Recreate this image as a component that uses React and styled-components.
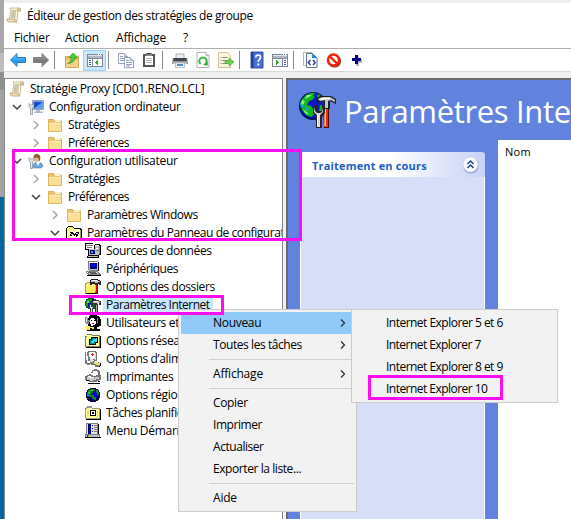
import React from 'react';
import styled, { createGlobalStyle } from 'styled-components';

const Global = createGlobalStyle`
  * { box-sizing: border-box; }
  html, body { margin: 0; padding: 0; overflow: hidden; }
  body { font-family: "Open Sans", "Noto Sans", sans-serif; font-size: 12px; color: #000; }
  svg { display: block; flex: none; overflow: visible; }
`;

const Screen = styled.div`
  position: relative;
  display: flex;
  width: 571px;
  height: 519px;
  overflow: hidden;
  background: #fff;
`;
const Desktop = styled.div`
  flex: none;
  width: 4px;
  background: linear-gradient(#a8a8a8 0 53px, #bcbcbc 53px 72px, #8f8f8f 72px 90px, #a3a3a3 90px 197px, #00679f 197px);
`;
const Window = styled.div`
  flex: 1;
  min-width: 0;
  display: flex;
  flex-direction: column;
  border-top: 3px solid #eeeff1;
`;
const Text = styled.span`
  white-space: pre;
  letter-spacing: ${(p) => p.$ls ?? -0.2}px;
`;
const TitleBar = styled.div`
  height: 24px;
  display: flex;
  align-items: center;
  gap: 5px;
  padding-left: 2px;
`;
const MenuBar = styled.div`
  height: 22px;
  display: flex;
  align-items: center;
  border-bottom: 1px solid #b0b0b0;
`;
const MenuBarItem = styled.div`
  width: ${(p) => p.$w}px;
  padding-left: 10px;
  padding-bottom: 1px;
`;
const Toolbar = styled.div`
  height: 23px;
  display: flex;
  align-items: center;
  padding-left: 2px;
  border-bottom: 1px solid #dadada;
`;
const ToolButton = styled.div`
  width: 23px;
  height: 21px;
  display: flex;
  align-items: center;
  justify-content: center;
  background: ${(p) => (p.$on ? '#cce8ff' : 'none')};
  border: 1px solid ${(p) => (p.$on ? '#99d1ff' : 'transparent')};
`;
const Divider = styled.div`
  width: 8px;
  height: 18px;
  padding-left: 2px;
  &::before { content: ''; display: block; width: 1px; height: 100%; background: #8a8a8a; }
`;
const Body = styled.div`
  flex: 1;
  min-height: 0;
  display: flex;
  padding-top: 6px;
  background: #f0f0f0;
`;
const Tree = styled.div`
  width: 279px;
  flex: none;
  padding-top: 1px;
  border: 1px solid #828790;
  border-bottom: 0;
  background: #fff;
  overflow: hidden;
`;
const TreeRow = styled.div`
  height: 18px;
  display: flex;
  align-items: center;
  padding-left: ${(p) => p.$level * 19 - 15}px;
`;
const Expander = styled.div`
  width: 19px;
  flex: none;
  display: flex;
  align-items: center;
  justify-content: center;
  padding-right: 4px;
`;
const RowLabel = styled.div`
  height: 18px;
  line-height: 17px;
  margin-left: 2px;
  padding: 0 3px;
  background: ${(p) => (p.$selected ? '#cce8ff' : 'none')};
`;
const Details = styled.div`
  flex: 1;
  min-width: 0;
  margin-left: 3px;
  display: flex;
  flex-direction: column;
  border: solid #696969;
  border-width: 2px 0 0 2px;
  background: #6183de;
`;
const Banner = styled.div`
  height: 60px;
  flex: none;
  display: flex;
  align-items: center;
  padding: 0 0 1px 10px;
  gap: 7px;
`;
const BannerTitle = styled.div`
  font-family: "Open Sans", "Noto Sans", sans-serif;
  font-size: 31px;
  line-height: 40px;
  color: #fff;
  white-space: pre;
  letter-spacing: -0.35px;
  padding-top: 2px;
`;
const Panes = styled.div`
  flex: 1;
  display: flex;
  min-height: 0;
`;
const TaskPane = styled.div`
  width: 185px;
  flex: none;
  margin: 12px 13px 0 12px;
  display: flex;
  flex-direction: column;
`;
const TaskHeader = styled.div`
  height: 25px;
  flex: none;
  display: flex;
  align-items: center;
  justify-content: space-between;
  padding: 2px 5px 0 12px;
  border-radius: 3px 3px 0 0;
  background: linear-gradient(90deg, #fff 48%, #c6d3f7);
  font-size: 11px;
  font-weight: 700;
  color: #215dc6;
`;
const TaskBody = styled.div`
  flex: 1;
  border: solid #fff;
  border-width: 0 1px;
  background: #d6dff7;
`;
const List = styled.div`
  flex: 1;
  background: #fff;
  padding: 3px 0 0 7px;
  font-size: 11px;
  line-height: 18px;
`;
const Menu = styled.div`
  position: absolute;
  left: ${(p) => p.$x}px;
  top: 309px;
  width: ${(p) => p.$w}px;
  padding: 2px;
  border: 1px solid #ccc;
  background: #f2f2f2;
`;
const MenuItem = styled.div`
  height: 22px;
  line-height: 22px;
  display: flex;
  align-items: center;
  justify-content: space-between;
  padding: 0 8px 0 32px;
  background: ${(p) => (p.$hot ? '#91c9f7' : 'none')};
`;
const MenuLine = styled.div`
  height: 1px;
  margin: 3px 0 3px 28px;
  background: #d0d0d0;
`;
const Highlight = styled.div`
  position: absolute;
  left: ${(p) => p.$x}px;
  top: ${(p) => p.$y}px;
  width: ${(p) => p.$w}px;
  height: ${(p) => p.$h}px;
  border: 3px solid #ff0cf0;
`;

const Svg = ({ s = 16, children }) => (
  <svg width={s} height={s} viewBox="0 0 16 16">{children}</svg>
);
/* Pixel icons: every entry is [colour, path data on a 16 by 16 grid]. */
const Pix = ({ s = 16, parts }) => (
  <svg width={s} height={s} viewBox="0 0 16 16" shapeRendering="crispEdges">
    {parts.map(([c, d], i) => <path key={i} fill={c} d={d} />)}
  </svg>
);

const Scroll = () => (
  <Svg>
    <path d="M4 1h9q2 0 1.500 2.500L12 4l-1 10H3L5 3z" fill="#f7f0d6" stroke="#c0b283" strokeWidth=".8" />
    <path d="M11 4q0-3 2-3t1.500 3z" fill="#e2d19b" stroke="#a9986a" strokeWidth=".6" />
    <path d="M1 12h8q0 3 2 3H3q-2 0-2-3z" fill="#eee0b4" stroke="#a9986a" strokeWidth=".7" />
    <path d="M5.500 4h4.500M5.300 6h4.500M5.100 8h4.500M4.900 10h4.500" stroke="#8b8775" strokeWidth=".8" />
  </Svg>
);
const Arrow = ({ back }) => (
  <Svg>
    <defs>
      <linearGradient id={back ? 'ab' : 'af'} x2="0" y2="1">
        <stop offset="0" stopColor={back ? '#7fd0fb' : '#aaa'} />
        <stop offset=".6" stopColor={back ? '#209ce8' : '#777'} />
        <stop offset="1" stopColor={back ? '#43bdf5' : '#999'} />
      </linearGradient>
    </defs>
    <path
      transform={back ? undefined : 'translate(16 0) scale(-1 1)'}
      d="M.5 8 7 1.500v4h8.500v5H7v4z"
      fill={`url(#${back ? 'ab' : 'af'})`}
      stroke={back ? '#2772b5' : '#777'}
      strokeWidth=".9"
      strokeLinejoin="round"
    />
  </Svg>
);
const Folder = () => (
  <Svg>
    <path d="M1.500 2.500h5l1 1.500h7v10.500h-13z" fill="#e9c46c" stroke="#d3a645" strokeWidth=".8" />
    <path d="M8 3.500h5.500v2H8z" fill="#fff8dc" />
    <path d="M1.500 5.500h13v9h-13z" fill="#fbdf96" stroke="#dab35b" strokeWidth=".8" />
    <path d="M2 6.300h12" stroke="#fff0bf" />
  </Svg>
);
const FolderUp = () => (
  <Svg>
    <path d="M1.500 4.500h4l1 1.500h8v9.500h-13z" fill="#eebf63" stroke="#c99943" strokeWidth=".8" />
    <path d="M9 4h5.500v2H9z" fill="#f4d68f" stroke="#c99943" strokeWidth=".6" />
    <path d="M2 8h12v7H2z" fill="#f6d083" />
    <path d="M3.500 11.500q4-1 4-6H5L9 1l4.500 4.500H11q0 5.500-7.500 6z" fill="#3fd032" stroke="#23951d" strokeWidth=".6" />
  </Svg>
);
const Pane = ({ right }) => (
  <Pix parts={[
    ['#7d8995', 'M0 2h16v13H0z'], ['#dfe6ee', 'M1 3h14v1H1z'], ['#aeb9c4', 'M1 4h14v2H1z'],
    ['#fff', right ? 'M1 7h9v7H1zM11 7h4v7h-4z' : 'M1 7h4v7H1zM6 7h9v7H6z'],
    ['#3468b3', right ? 'M12 8h2v1h-2zM12 10h2v1h-2zM12 12h2v1h-2z' : 'M2 8h2v1H2zM2 10h2v1H2zM2 12h2v1H2z'],
    ['#36a62d', right ? 'M4 8h1v1h1v1h1v1H6v1H5v1H4z' : 'M11 8h-1v1H9v1H8v1h1v1h1v1h1z'],
    ['#fff', 'M11 2h1v1h-1zM13 2h1v1h-1z'],
  ]} />
);
const Copy = () => (
  <Svg>
    <g fill="#fff" stroke="#8c98a8" strokeWidth=".9">
      <path d="M.5 1.500h6l3 3v7h-9z" /><path d="M6.500 5.500h5.500l3.500 3.200v7h-9z" />
    </g>
    <path d="M2 4.500h3M2 6.500h4M2 8.500h4M8 8.500h3M8 10.500h6M8 12.500h6M8 14h4" stroke="#7087b4" strokeWidth=".8" />
    <path d="M12 5.500v3.200h3.500M6.500 1.500v3h3" fill="#cfd8e6" stroke="#8491a4" strokeWidth=".7" />
  </Svg>
);
const Clip = () => (
  <Pix parts={[
    ['#555', 'M2 2h12v13H2z'], ['#fff', 'M4 4h8v9H4z'], ['#888', 'M5 1h6v3H5z'], ['#333', 'M6 1h4v1H6z'],
    ['#b0b0b0', 'M5 6h6v1H5zM5 8h6v1H5zM5 10h6v1H5z'],
  ]} />
);
const Printer = () => (
  <Svg>
    <path d="M4 6V2h8v4" fill="#eef1f5" stroke="#97a0aa" strokeWidth=".8" />
    <path d="M1 6h14l1 6H0z" fill="#696e74" /><path d="M2 6h12v3H2z" fill="#42464b" />
    <path d="M.5 9.500h15v2.500H.5z" fill="#b9bdc2" />
    <path d="M3.500 11h9v4.500h-9z" fill="#fff" stroke="#a2abb5" strokeWidth=".7" /><path d="M5 12h6v2H5z" fill="#4d91cd" />
  </Svg>
);
const Refresh = () => (
  <Svg>
    <path d="M2 .5h9l3 3v12H2z" fill="#fff" stroke="#a9a9a9" strokeWidth=".9" />
    <path d="M11 .5v3h3" fill="#ddd" stroke="#a9a9a9" strokeWidth=".7" />
    <path d="M5.700 12A3.600 3.600 0 1 1 11 11" fill="none" stroke="#43b848" strokeWidth="1.900" />
    <path d="M8 12.800 12.700 9v4.800z" fill="#2fa637" />
  </Svg>
);
const Export = () => (
  <Svg>
    <path d="M.5.5h9l3 3v12H.5z" fill="#fdf8dc" stroke="#c6b98c" strokeWidth=".9" />
    <path d="M2.500 5.500h1M4.500 5.500h5M2.500 8.500h1M4.500 8.500h5M2.500 11.500h1M4.500 11.500h5" stroke="#777" strokeWidth=".9" />
    <path d="M7 8.500h4V6l5 4-5 4v-2.500H7z" fill="#6cd04a" stroke="#3ea22b" strokeWidth=".6" />
  </Svg>
);
const Help = () => (
  <Svg>
    <path d="M2 0h12v16H2z" fill="#4a70d2" stroke="#28479b" strokeWidth=".9" /><path d="M2 0h2.500v16H2z" fill="#25408e" />
    <path d="M6.800 5.500q0-2.500 2.400-2.500t2.300 2.300q0 1.500-1.300 2.400-.9.700-.9 2.300" fill="none" stroke="#fff" strokeWidth="1.600" />
    <path d="M8.300 11.500h2v2h-2z" fill="#fff" />
  </Svg>
);
const Script = () => (
  <Svg>
    <path d="M.5.500h8l3 3v10H.5z" fill="#fff" stroke="#a2acb8" strokeWidth=".9" />
    <path d="M3.500 1.500h6l4.500 4.500v9.500H3.500z" fill="#f6fbff" stroke="#526a85" strokeWidth=".9" />
    <path d="M9 1 14.500 6H9z" fill="#2a8cd1" />
    <path d="M7.500 8 5.300 10.500 7.500 13M10 8l2.200 2.500L10 13" fill="none" stroke="#26349b" strokeWidth="1.300" />
  </Svg>
);
const Forbid = () => (
  <Svg>
    <circle cx="8.500" cy="9" r="6.600" fill="#7a3b28" />
    <circle cx="7.500" cy="8" r="5.500" fill="#fff" stroke="#f3260c" strokeWidth="2.600" />
    <path d="m3.600 4 7.800 8" stroke="#f3260c" strokeWidth="2.500" />
  </Svg>
);
const Plus = () => <Pix parts={[['#b5b5b5', 'M7 4h3v3h3v4h-3v3H7z'], ['#000080', 'M6 3h3v3h3v3H9v3H6V9H3V6h3z']]} />;

const Chevron = ({ open }) => (
  <svg width="10" height="10" viewBox="0 0 10 10">
    <path d={open ? 'M1 3l4 4 4-4' : 'M3 1l4 4-4 4'} fill="none" stroke={open ? '#404040' : '#a6a6a6'} strokeWidth="1.500" />
  </svg>
);
const SubArrow = () => (
  <svg width="6" height="8" viewBox="0 0 6 8"><path d="M1 .5 4.500 4 1 7.500" fill="none" stroke="#333" strokeWidth="1.300" /></svg>
);
const Wrench = () => (
  <path d="M1 4.500v2.500q0 1.500 1.500 2v6.500h2V9Q6 8.500 6 7V4.500L4.500 6h-2z" fill="#e2e5e8" stroke="#6f7880" strokeWidth=".6" />
);
const Computer = () => (
  <Svg>
    <path d="M4.500 1.500h11v9h-11z" fill="#dce5f4" stroke="#8998b0" strokeWidth=".9" />
    <path d="M5.500 2.500h9v7h-9z" fill="#164bd0" /><path d="M6 9.500 14.500 3v6.500z" fill="#5b9df5" />
    <path d="M8 11h4v1.500H8zM6 12.500h9V14H6z" fill="#aebace" />
    <Wrench />
  </Svg>
);
const User = () => (
  <Svg>
    <path d="M5 14q0-5 4.500-5t5.500 4l-2 2H6z" fill="#6fa9dc" stroke="#467fae" strokeWidth=".6" />
    <circle cx="9" cy="5.500" r="3.300" fill="#e7b98c" /><path d="M5.700 5Q5.300 1.300 8.500 1q3.700 0 3.800 3.500-.3 3.500-1.300 4L10.500 5Q8 4 5.700 5z" fill="#8b5a32" />
    <path d="m8 9 2 4 2-4z" fill="#fff" />
    <Wrench />
  </Svg>
);
const ControlFolder = () => (
  <Pix parts={[
    ['#000', 'M2 1h5v1h1v1h7v1h1v11H1v-1H0V3h1V2h1z'], ['#ffff80', 'M2 2h5v1h1v1h6v10H1V3h1z'],
    ['#fffbd0', 'M3 5h10v8H3z'], ['#a09a48', 'M1 13h13v1H1zM14 5h1v9h-1z'],
    ['#000', 'M4 7h3v1h1v1h1V8h1V7h3v2h-1v2h-1v1h-1v-2H9v1H8v-1H6v1H4V9h1V8H4z'], ['#c0c0c0', 'M10 8h2v1h-2zM5 9h2v1H5z'],
  ]} />
);
const DataSource = () => (
  <Pix parts={[
    ['#000', 'M0 0h8v1H0zM0 0h1v7H0zM1 6h3v1H1zM9 1h6v1h1v10h-2v1H9V2h1zM3 5h9v8H3zM2 13h12v2H2z'],
    ['#fff', 'M1 1h8v5H1zM10 2h4v1h-4z'], ['#808080', 'M1 2h7v1H1zM2 4h5v1H2z'], ['#c0c0c0', 'M10 3h4v9h-4zM4 6h7v6H4zM3 13h10v1H3z'],
    ['#000080', 'M5 7h5v4H5z'], ['#00c8ff', 'M6 8h2v2H6z'], ['#fff', 'M11 5h2v1h-2z'], ['#808080', 'M11 7h3v1h-3zM14 3h1v8h-1z'],
  ]} />
);
const Laptop = () => (
  <Pix parts={[
    ['#808080', 'M3 0h10v1h1v9H4V9H3z'], ['#c0c0c0', 'M4 1h9v8H4z'], ['#fff', 'M4 1h9v1H4z'], ['#000080', 'M5 2h7v6H5z'], ['#0000ff', 'M6 3h4v3H6z'],
    ['#000', 'M13 1h1v9h-1zM2 14h13v1H2zM15 13h1v2h-1z'], ['#808080', 'M1 10h12v1h1v1h1v1h1v1H3v-1H2v-1H1z'], ['#e6e6e6', 'M2 11h10v1h1v1H4v-1H2z'],
    ['#606060', 'M3 11h8v1H3zM5 12h7v1H5z'],
  ]} />
);
const FolderTool = () => (
  <Pix parts={[
    ['#a79a48', 'M2 3h5v1h6v11H0V4h2z'], ['#ffee60', 'M2 4h5v1h5v9H1V5h1z'], ['#fffbc0', 'M2 6h8v1H2z'], ['#000', 'M1 14h12v1H1z'],
    ['#222', 'M5 1h1V0h7v1h2v1h1v4h-2V5h-1v10h-3V5H7v1H5z'], ['#c0c0c0', 'M6 1h7v1h2v1h-2v1h-3V3H6z'], ['#fff', 'M7 1h5v1H7z'],
    ['#e00000', 'M10 6h2v8h-2z'], ['#ffa080', 'M10 6h1v7h-1z'],
  ]} />
);
const Globe = () => (
  <>
    <path fill="#000050" d="M5 1h6v1h2v1h1v2h1v6h-1v2h-1v1h-2v1H5v-1H3v-1H2v-2H1V5h1V3h1V2h2z" />
    <path fill="#0000c0" d="M6 2h5v2h2v7h-2v2H7V9H4V4h2z" />
    <path fill="#108420" d="M5 2h5v2H8v2H6v2h3v2h2v3H9v-1H7v-2H4V9H2V5h1V3h2zM11 3h2v2h1v3h-2V6h-1z" />
    <path fill="#40c040" d="M5 3h3v1H5zM3 5h2v2H3z" /><path fill="#00bdf0" d="M2 8h2v1H2z" />
  </>
);
const GlobeIcon = () => <svg width="16" height="16" viewBox="0 0 16 16" shapeRendering="crispEdges"><Globe /></svg>;
const Internet = () => (
  <Pix parts={[
    ['#105030', 'M3 1h6v1h2v2h1v7h-2v1H3v-1H1v-2H0V4h1V2h2z'], ['#12a02c', 'M3 2h4v2H5v2H3v3H1V4h1V3h1z'], ['#0000a0', 'M7 2h2v2H7zM3 6h3v3H4v1H3z'], ['#6bdc66', 'M2 4h2v2H2z'],
    ['#333', 'M7 3h7v1h2v4h-2V6h-1v10h-3V7H7z'], ['#c0c0c0', 'M8 4h6v1h1v1h-2v1h-1V6H8z'], ['#fff', 'M9 4h4v1H9z'], ['#a8a8a8', 'M11 8h1v7h-1z'],
    ['#444', 'M4 7h2v1h1v1h1V7h1v3H8v6H5v-5H4z'], ['#e0e0e0', 'M5 8h1v2h2v1H7v4H6v-4H5z'],
  ]} />
);
const BannerIcon = () => (
  <svg width="39" height="38" viewBox="0 0 39 38">
    <circle cx="15" cy="15" r="14" fill="#00104c" />
    <circle cx="15" cy="14.500" r="12.600" fill="#0b18c8" />
    <path d="M8 4q5-3 9-2l-2 3 2 1-3 3-3 1-2 4 4 1 3 4 1 4-4 3-5-2-4-5-2-7 2-4z" fill="#0cb91e" />
    <path d="M20 3l5 3 2 5-3-1-2-3-3-1zM22 14l4 1-1 5-4 1z" fill="#0cb91e" />
    <path d="M9 4h5l-3 2-4 2zM4 9l3 1-2 4-2-1zM5 18l4 3 2 3-4-2z" fill="#8cf47a" />
    <path d="M2 12l4 3-3 2zM8 16l4 2-4 1z" fill="#12a6e8" />
    <path d="M25 17h6v20h-5z" fill="#420c08" /><path d="M26 18h4v18h-4z" fill="#f02912" /><path d="M26.500 18H28v17h-1.500z" fill="#ffc0a0" />
    <path d="M18 9q3-5 7-4h8l5 3v5l-4-2-2-1v8h-6v-8l-4 1-2 2z" fill="#202024" />
    <path d="M20 8q3-2 6-2h6l5 3v2l-4-2-3 1v7h-3V9l-5 1z" fill="#c4c7cc" /><path d="M21 8q4-2 11-1v1l-9 1z" fill="#fff" />
    <path d="M15 15v7l3 3v12h6V25l3-3v-6l-3-2v6h-5v-6z" fill="#26262a" />
    <path d="M16 16v5l3 3v12h3V24l3-3v-4l-1 4-2 1h-3l-2-2z" fill="#d9dce0" /><path d="M19 24h1v11h-1z" fill="#fff" />
  </svg>
);
const Person = () => (
  <Pix parts={[
    ['#000', 'M5 0h7v1h2v1h1v2h1v7h-2v1h-2v2h3v2H2v-1H5v-3H3V3h1V1h1z'], ['#fff', 'M5 4h1V3h3v1h1v2h1v3h-1v1H8v1H6V9H5z'], ['#000', 'M6 5h1v1H6zM9 5h1v1H9z'],
    ['#808080', 'M0 2h2v1h1v2h2v2H4v2H1V8H0z'], ['#e4e4e4', 'M1 3h1v4H1z'], ['#ffe94c', 'M1 11h4v1h4v2H7v-1H4v2H1z'],
    ['#d00000', 'M7 8h2v1H7z'], ['#808080', 'M12 3h1v5h-1z'],
  ]} />
);
const Network = () => (
  <Pix parts={[
    ['#808048', 'M2 1h5v1h8v12H0V3h2z'], ['#000', 'M1 14h15v1H1zM15 3h1v12h-1z'], ['#ffff9c', 'M2 2h5v1h7v10H1V4h1z'], ['#000', 'M6 4h7v6h-2v2H4V6h2z'],
    ['#c0c0c0', 'M7 5h5v4H7z'], ['#008c98', 'M7 5h4v3H7zM5 7h5v4H5z'], ['#16e3e9', 'M8 6h4v2H8zM6 8h3v2H6z'],
  ]} />
);
const Power = () => (
  <Pix parts={[
    ['#777', 'M3 0h8v1h1v9H9V9H5v1H3V5H2V1h1zM0 1h1v8h1v3h3v2H2v-1H0z'], ['#fff', 'M4 1h6v7H5V6H4z'], ['#e11c1c', 'M7 2h1v1h1v1H8v1H7V4H6V3h1z'],
    ['#000', 'M10 15h5v1h-5zM15 12h1v3h-1z'], ['#777', 'M5 10h5v1h4v1h1v3h-1v1h-4v-2H6v-1H5z'], ['#e6dc70', 'M9 11h4v1h2v2h-4v-1H9z'], ['#d8d8d8', 'M5 8h3v3H5zM10 2h1v7h-1z'],
  ]} />
);
const PrinterOld = () => (
  <Pix parts={[
    ['#777', 'M7 1h2V0h3v1h2v1h1v4h1v5h-2v1h-2v1h-2v1H7v-1H4v-1H1v-1H0V7h2V6h2V5h2V3h1z'],
    ['#fff', 'M8 2h4v1h1v3h-2v1H8V6H6V4h2zM3 7h3v1h3v1H5V8H3z'], ['#c9c9c9', 'M2 8h3v1h5V8h4v2h-3v1H8v1H5v-1H2z'],
    ['#000', 'M3 14h12v1H3zM13 12h2v1h-2zM1 11h3v1H1z'], ['#fff', 'M5 13h7v1H5z'],
  ]} />
);
const Tasks = () => (
  <Pix parts={[
    ['#999', 'M2 1h5v2h8v11H0V3h1V2h1z'], ['#000', 'M1 14h15v1H1zM15 4h1v11h-1z'], ['#ffff96', 'M2 3h5v1h7v9H1V4h1z'],
    ['#ece16b', 'M2 5h2v7H2zM12 5h1v7h-1z'], ['#000', 'M5 5h6v6H5z'], ['#fff', 'M6 6h4v4H6z'], ['#000', 'M7 7h2v2H7z'],
  ]} />
);
const StartMenu = () => (
  <Pix parts={[
    ['#808080', 'M1 0h12v12H1zM0 11h15v3H0z'], ['#e4e4e4', 'M2 1h10v10H2z'], ['#000080', 'M3 1h3v10H3z'], ['#0000ff', 'M7 2h1v1H7zM7 5h1v1H7zM7 8h1v1H7z'],
    ['#777', 'M9 2h3v1H9zM9 4h3v1H9zM9 6h3v1H9zM9 8h3v1H9z'], ['#c0c0c0', 'M1 12h13v2H1z'], ['#e00000', 'M2 12h1v1H2z'], ['#00a000', 'M3 12h1v1H3z'], ['#0000ff', 'M2 13h1v1H2z'], ['#ffe000', 'M3 13h1v1H3z'], ['#000', 'M0 14h16v1H0zM13 1h1v10h-1z'],
  ]} />
);
const Collapse = () => (
  <svg width="19" height="19" viewBox="0 0 19 19">
    <circle cx="10" cy="9.500" r="8" fill="#9dabd0" /><circle cx="9.500" cy="8.500" r="7.500" fill="#fff" stroke="#c3cce4" strokeWidth=".7" />
    <path d="M6.500 8 9.500 5l3 3M6.500 12l3-3 3 3" fill="none" stroke="#1d3f92" strokeWidth="1.500" />
  </svg>
);

const tree = [
  [0, null, Scroll, 'Stratégie Proxy [CD01.RENO.LCL]', -0.32],
  [1, true, Computer, 'Configuration ordinateur', -0.33],
  [2, false, Folder, 'Stratégies', -0.4],
  [2, false, Folder, 'Préférences', -0.53],
  [1, true, User, 'Configuration utilisateur', -0.3],
  [2, false, Folder, 'Stratégies', -0.4],
  [2, true, Folder, 'Préférences', -0.53],
  [3, false, Folder, 'Paramètres Windows', -0.47],
  [3, true, ControlFolder, 'Paramètres du Panneau de configuration', -0.44],
  [4, null, DataSource, 'Sources de données', -0.42],
  [4, null, Laptop, 'Périphériques', -0.5],
  [4, null, FolderTool, 'Options des dossiers', -0.4],
  [4, null, Internet, 'Paramètres Internet', -0.5, true],
  [4, null, Person, 'Utilisateurs et groupes locaux', -0.3],
  [4, null, Network, 'Options réseau', -0.35],
  [4, null, Power, 'Options d’alimentation', -0.35],
  [4, null, PrinterOld, 'Imprimantes', -0.4],
  [4, null, GlobeIcon, 'Options régionales', -0.35],
  [4, null, Tasks, 'Tâches planifiées', -0.4],
  [4, null, StartMenu, 'Menu Démarrer', -0.3],
];
const toolbar = [
  <Arrow back />, <Arrow />, null, <FolderUp />, <Pane />, null, <Copy />, <Clip />, null, <Printer />, <Refresh />,
  <Export />, null, <Help />, <Pane right />, null, <Script />, <Forbid />, <Plus />,
];
const menuBar = [['Fichier', 51], ['Action', 51], ['Affichage', 67], ['?', 30]];
const menu = [
  ['Nouveau', -0.3, true], ['Toutes les tâches', -0.43, true], null, ['Affichage', -0.2, true], null,
  ['Copier', -0.35], ['Imprimer', -0.45], ['Actualiser', -0.45], ['Exporter la liste...', -0.42], null, ['Aide', -0.2],
];
const submenu = [
  ['Internet Explorer 5 et 6', -0.52], ['Internet Explorer 7', -0.55], ['Internet Explorer 8 et 9', -0.52], ['Internet Explorer 10', -0.53],
];

export default function App() {
  return (
    <Screen>
      <Global />
      <Desktop />
      <Window>
        <TitleBar><Scroll /><Text $ls={-0.39}>Éditeur de gestion des stratégies de groupe</Text></TitleBar>
        <MenuBar>
          {menuBar.map(([t, w]) => <MenuBarItem key={t} $w={w}><Text>{t}</Text></MenuBarItem>)}
        </MenuBar>
        <Toolbar>
          {toolbar.map((icon, i) => (icon ? <ToolButton key={i} $on={i === 4}>{icon}</ToolButton> : <Divider key={i} />))}
        </Toolbar>
        <Body>
          <Tree>
            {tree.map(([level, open, Icon, label, ls, selected], i) => (
              <TreeRow key={i} $level={Math.max(level, 1)}>
                {level > 0 && <Expander>{open !== null && <Chevron open={open} />}</Expander>}
                <Icon />
                <RowLabel $selected={selected}><Text $ls={ls}>{label}</Text></RowLabel>
              </TreeRow>
            ))}
          </Tree>
          <Details>
            <Banner><BannerIcon /><BannerTitle>Paramètres Internet</BannerTitle></Banner>
            <Panes>
              <TaskPane>
                <TaskHeader><Text $ls={0.17}>Traitement en cours</Text><Collapse /></TaskHeader>
                <TaskBody />
              </TaskPane>
              <List><Text $ls={0.3}>Nom</Text></List>
            </Panes>
          </Details>
        </Body>
      </Window>
      <Menu $x={178} $w={179}>
        {menu.map((m, i) => (m
          ? <MenuItem key={i} $hot={i === 0}><Text $ls={m[1]}>{m[0]}</Text>{m[2] && <SubArrow />}</MenuItem>
          : <MenuLine key={i} />))}
      </Menu>
      <Menu $x={351} $w={207}>
        {submenu.map(([t, ls]) => <MenuItem key={t}><Text $ls={ls}>{t}</Text></MenuItem>)}
      </Menu>
      <Highlight $x={12} $y={149} $w={290} $h={92} />
      <Highlight $x={69} $y={295} $w={155} $h={20} />
      <Highlight $x={368} $y={375} $w={135} $h={25} />
    </Screen>
  );
}
